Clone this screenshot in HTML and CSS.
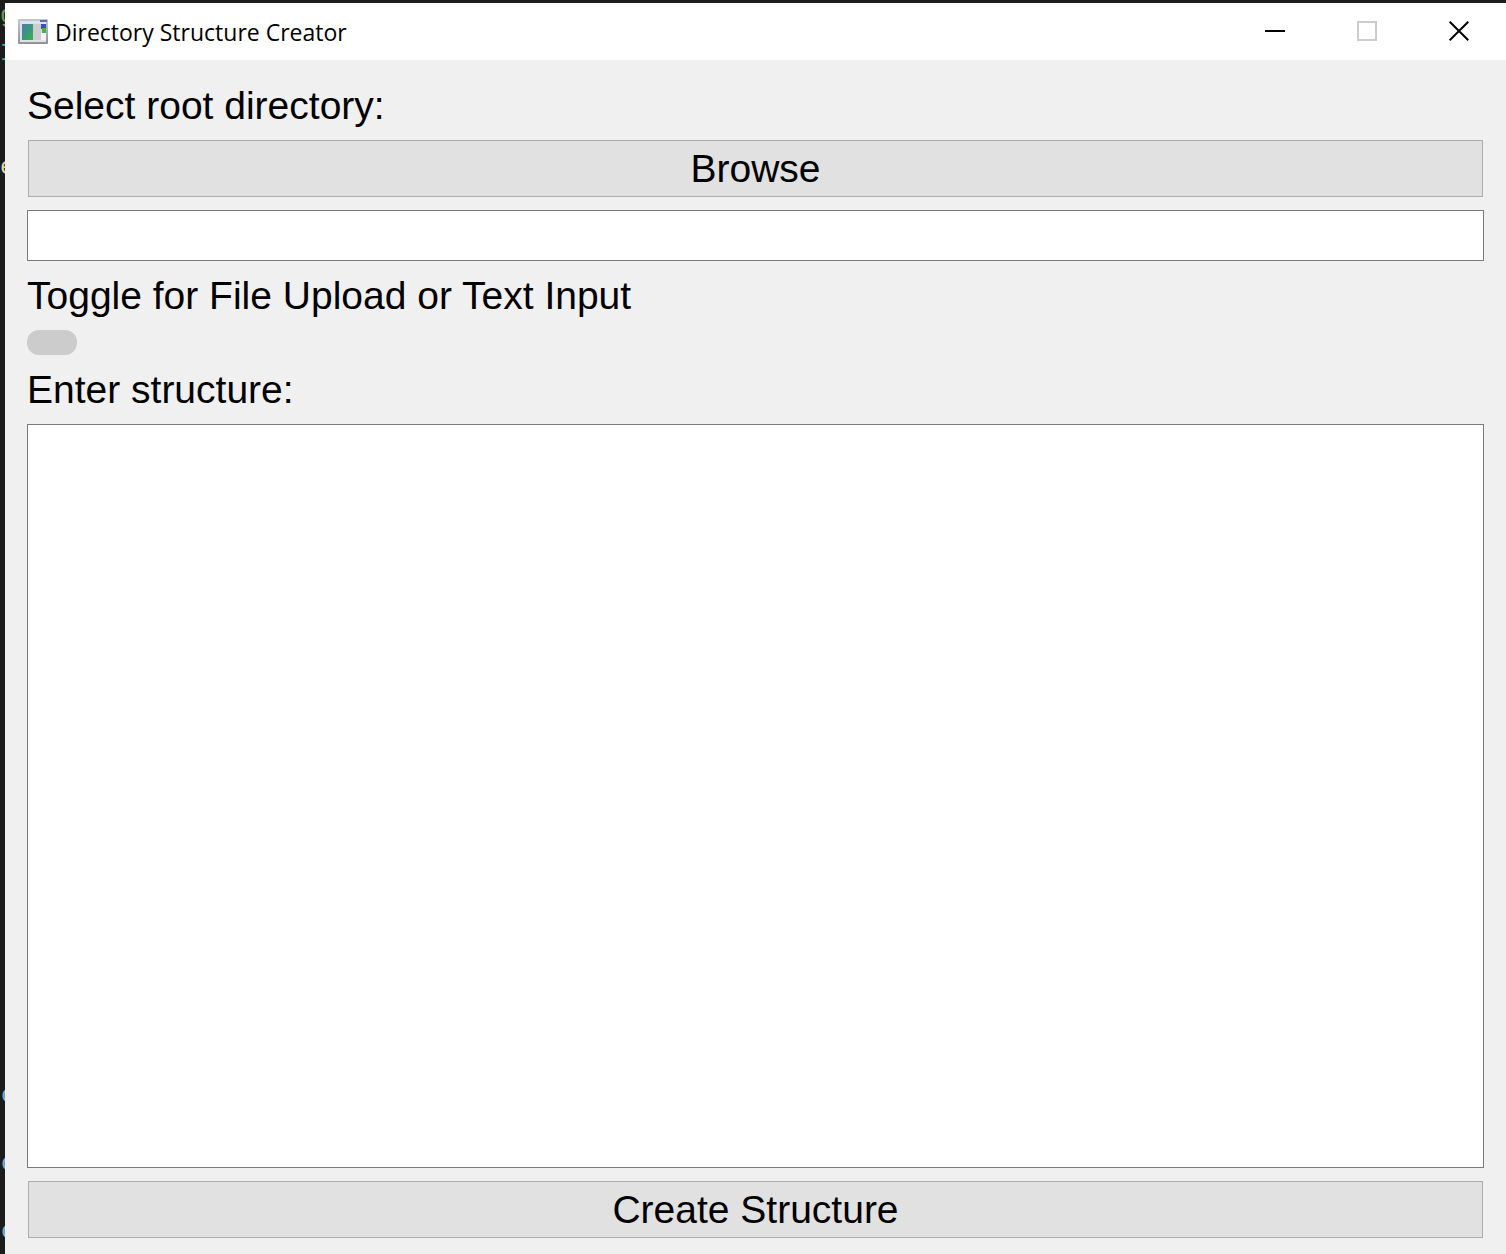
FILE: index.html
```
<!DOCTYPE html>
<html lang="en">
<head>
<meta charset="utf-8">
<title>Directory Structure Creator</title>
<link rel="stylesheet" href="styles.css">
</head>
<body>
<div class="editor" aria-hidden="true">
  <span class="code code-green">g</span>
  <span class="code code-teal">I</span>
  <span class="code code-yellow">e</span>
  <span class="code code-blue code-a">c</span>
  <span class="code code-blue code-b">c</span>
  <span class="code code-blue code-c">c</span>
</div>
<div class="window">
  <header class="titlebar">
    <svg class="app-icon" width="30" height="25" viewBox="0 0 30 25" aria-hidden="true">
      <defs>
        <linearGradient id="pane" x1="0" y1="0" x2="1" y2="1">
          <stop offset="0" stop-color="#4b7fa8"/>
          <stop offset=".5" stop-color="#3b9580"/>
          <stop offset="1" stop-color="#35b83e"/>
        </linearGradient>
        <linearGradient id="frame" x1="0" y1="0" x2="0" y2="1">
          <stop offset="0" stop-color="#c3c7d0"/>
          <stop offset="1" stop-color="#8e9198"/>
        </linearGradient>
      </defs>
      <rect width="30" height="25" rx="1" fill="url(#frame)"/>
      <rect x="2" y="2" width="26" height="21" fill="#dfe2e8"/>
      <rect x="22" y="1" width="7" height="2" fill="#6a69b0"/>
      <rect x="4" y="5" width="11" height="16" fill="url(#pane)"/>
      <rect x="15" y="5" width="8" height="16" fill="#cfccd0"/>
      <rect x="23" y="5" width="5" height="5" fill="#3450b4"/>
      <rect x="24" y="9" width="4" height="5" fill="#4fae4a"/>
      <rect x="23" y="14" width="5" height="7" fill="#f4f4f6"/>
    </svg>
    <h1 class="title">Directory Structure Creator</h1>
    <button class="control" type="button" aria-label="Minimize">
      <svg width="20" height="20" viewBox="0 0 20 20"><path d="M0 10H20" stroke="#000" stroke-width="2"/></svg>
    </button>
    <button class="control" type="button" aria-label="Maximize" disabled>
      <svg width="20" height="20" viewBox="0 0 20 20"><rect x="1" y="1" width="18" height="18" fill="none" stroke="#ccc" stroke-width="2"/></svg>
    </button>
    <button class="control" type="button" aria-label="Close">
      <svg width="20" height="20" viewBox="0 0 20 20"><path d="M.7.7 19.3 19.3M19.3.7.7 19.3" stroke="#000" stroke-width="2"/></svg>
    </button>
  </header>
  <form class="content">
    <label class="label" for="root">Select root directory:</label>
    <button class="button" type="button">Browse</button>
    <input class="field" id="root" type="text">
    <label class="label" for="mode">Toggle for File Upload or Text Input</label>
    <input class="toggle" id="mode" type="checkbox">
    <label class="label" for="structure">Enter structure:</label>
    <textarea class="field area" id="structure"></textarea>
    <button class="button" type="button">Create Structure</button>
  </form>
</div>
</body>
</html>
```
FILE: styles.css
```
* {
  box-sizing: border-box;
}

body {
  margin: 0;
  min-height: 100vh;
  padding: 3px 0 0 5px;
  display: flex;
  background: #1c1c1c;
  color: #000;
  font-family: "Liberation Sans", Arial, sans-serif;
}

/* Code editor showing behind the window's left edge */
.editor {
  position: absolute;
  top: 0;
  left: 0;
  width: 5px;
  height: 100%;
  overflow: hidden;
}

.code {
  position: absolute;
  left: 0;
  font: 24px/28px "Liberation Mono", monospace;
}

.code-green { top: 2px; color: #6a9955; }
.code-teal { top: 40px; color: #3ab5a8; }
.code-yellow { top: 154px; color: #dcdcaa; }
.code-blue { left: 1px; color: #7fb0cc; }
.code-a { top: 1082px; }
.code-b { top: 1150px; }
.code-c { top: 1218px; }

.window {
  position: relative;
  flex: 1;
  display: flex;
  flex-direction: column;
  background: #f0f0f0;
}

.titlebar {
  display: flex;
  align-items: center;
  height: 57px;
  padding: 0 1px 0 13px;
  background: #fff;
}

.title {
  flex: 1;
  margin: 0 0 0 7px;
  font: 400 23px/32px "Open Sans", "Noto Sans", sans-serif;
}

.control {
  display: flex;
  align-items: center;
  justify-content: center;
  width: 92px;
  height: 56px;
  align-self: flex-start;
  padding: 0;
  border: 0;
  background: none;
}

.content {
  flex: 1;
  display: flex;
  flex-direction: column;
  gap: 13px;
  padding: 24px 22px 16px;
}

.label {
  font-size: 39px;
  line-height: 43px;
}

.button {
  height: 57px;
  margin: 0 1px;
  padding: 0;
  border: 1px solid #adadad;
  background: #e1e1e1;
  color: inherit;
  font: inherit;
  font-size: 39px;
}

.field {
  height: 51px;
  margin: 0;
  padding: 0 6px;
  border: 1px solid #7a7a7a;
  border-radius: 0;
  background: #fff;
  font: inherit;
  font-size: 39px;
}

.area {
  flex: 1;
  resize: none;
}

.toggle {
  appearance: none;
  width: 50px;
  height: 25px;
  margin: 0;
  border-radius: 12px;
  background: #ccc;
}
```
